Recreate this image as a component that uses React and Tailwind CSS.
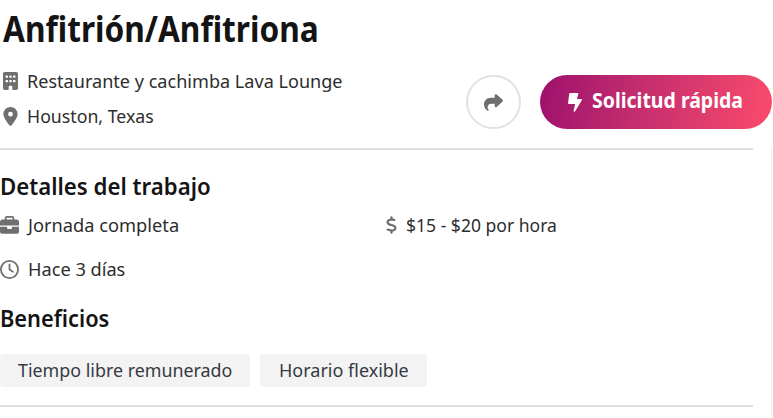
import { FaBuilding, FaLocationDot, FaShare, FaBriefcase, FaRegClock, FaDollarSign } from "react-icons/fa6";

function Label({ className = "", children }) {
  return <span className={"inline-block origin-left whitespace-nowrap " + className}>{children}</span>;
}

function Bolt() {
  return (
    <svg viewBox="0 0 14 19" className="h-[19px] w-[14px] shrink-0 fill-white">
      <path d="M2 0H10.500L9 6H13.500Q14.200 6.300 13.800 7.200L7 18.500Q6 19.300 5.500 18L7.200 11H1Q0 10.800 .1 9.800L1.200 1Q1.300 .2 2 0Z" />
    </svg>
  );
}

export default function App() {
  return (
    <main className="flex h-[418px] w-[773px] flex-col overflow-hidden bg-white font-['Noto_Sans',sans-serif] text-[18.5px] leading-6 text-[#2d2d2d]">
      <h1 className="h-[58px] pl-[3px] text-[36px] leading-[57px] font-bold text-[#141414]">
        <Label className="scale-x-[0.879]">Anfitrión/Anfitriona</Label>
      </h1>
      <header className="flex h-[90px] justify-between pr-px">
        <div className="flex flex-col gap-[11px] pt-[11px] pl-[3px]">
          <div className="flex items-center">
            <FaBuilding className="h-[18px] w-[15px] text-[#6f6f6f]" preserveAspectRatio="none" />
            <Label className="ml-[9px] scale-x-[0.977]">Restaurante y cachimba Lava Lounge</Label>
          </div>
          <div className="flex items-center">
            <FaLocationDot className="h-[19px] w-[15px] text-[#6f6f6f]" />
            <Label className="ml-[9px] scale-x-[0.958]">Houston, Texas</Label>
          </div>
        </div>
        <div className="flex gap-[19px] pt-[17px]">
          <button className="flex h-[54px] w-[55px] items-center justify-center rounded-full border-2 border-[#e2e2e2]">
            <FaShare className="h-[19px] w-[19px] text-[#6f6f6f]" />
          </button>
          <button className="flex h-[54px] w-[232px] items-center rounded-full bg-linear-100 from-[#9e0f6c] to-[#fb4b6b] pl-[28px] text-[20.5px] font-bold text-white">
            <Bolt />
            <Label className="mb-[4px] ml-[10px] scale-x-[0.95]">Solicitud rápida</Label>
          </button>
        </div>
      </header>
      <div className="flex grow">
        <div className="w-[753px] border-t-2 border-[#e0e0e0]">
          <h2 className="mt-[22px] text-[23px] leading-[28px] font-semibold text-[#141414]">
            <Label className="scale-x-[0.966]">Detalles del trabajo</Label>
          </h2>
          <div className="mt-[13px] grid grid-cols-[386px_1fr] gap-y-[20px]">
            <div className="flex items-center">
              <FaBriefcase className="h-[19px] w-[19px] text-[#6f6f6f]" />
              <Label className="ml-[9px] scale-x-[0.986]">Jornada completa</Label>
            </div>
            <div className="flex items-center">
              <FaDollarSign className="h-[18px] w-[11px] text-[#6f6f6f]" />
              <Label className="ml-[9px] scale-x-[0.948]">$15 - $20 por hora</Label>
            </div>
            <div className="flex items-center">
              <FaRegClock className="h-[19px] w-[19px] text-[#6f6f6f]" />
              <Label className="ml-[9px] scale-x-[0.983]">Hace 3 días</Label>
            </div>
          </div>
          <h2 className="mt-[23px] text-[23px] leading-[28px] font-semibold text-[#141414]">
            <Label className="scale-x-[0.948]">Beneficios</Label>
          </h2>
          <div className="mt-[22px] flex gap-[10px] text-[#353a43]">
            <div className="flex h-[33px] w-[250px] items-center rounded bg-[#f3f3f3] pb-[2px] pl-[18px]">
              <Label className="scale-x-[0.965]">Tiempo libre remunerado</Label>
            </div>
            <div className="flex h-[33px] w-[167px] items-center rounded bg-[#f3f3f3] pb-[2px] pl-[19px]">
              <Label className="scale-x-[0.973]">Horario flexible</Label>
            </div>
          </div>
          <hr className="mt-[18px] border-t-2 border-[#e0e0e0]" />
        </div>
        <div className="ml-[18px] w-px bg-[#f0f0f0]" />
      </div>
    </main>
  );
}
